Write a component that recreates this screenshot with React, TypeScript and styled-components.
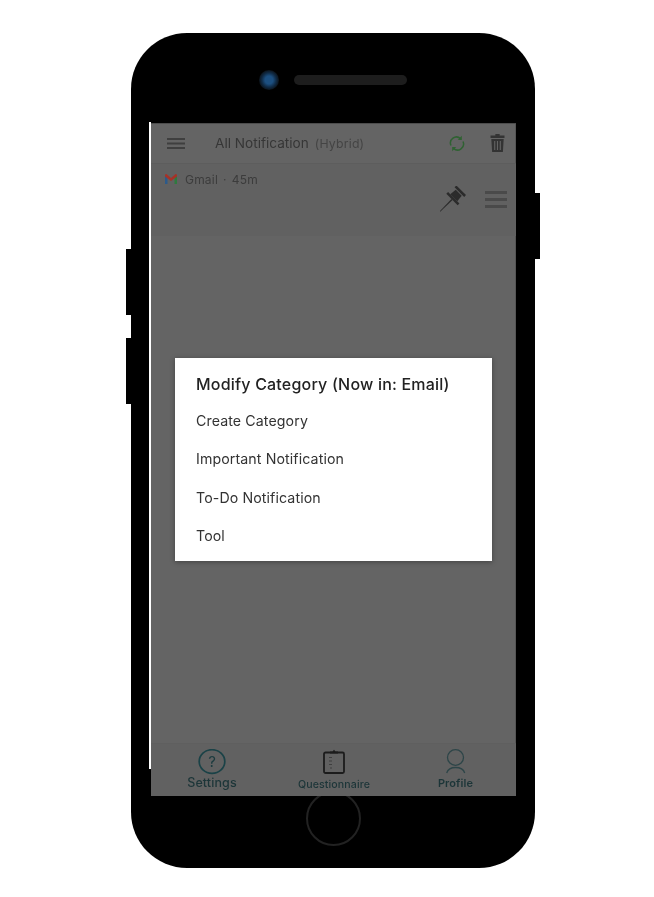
import React from "react";
import styled, { createGlobalStyle } from "styled-components";

const Global = createGlobalStyle`
  html, body { margin: 0; padding: 0; background: #fff; width: 654px; height: 897px; overflow: hidden; }
  * { box-sizing: border-box; }
  body { font-family: Inter, "Noto Sans", sans-serif; }
`;

const Page = styled.div`
  width: 654px;
  height: 897px;
  padding: 33px 119px 29px 131px;
  background: #fff;
`;

const Phone = styled.div`
  position: relative;
  width: 404px;
  height: 835px;
  background: #000;
  border-radius: 56px;
  display: flex;
  flex-direction: column;
  align-items: center;
`;

const SideButton = styled.div<{ $side: "left" | "right"; $top: number }>`
  position: absolute;
  ${(p) => (p.$side === "left" ? "left: -5px;" : "right: -5px;")}
  top: ${(p) => p.$top}px;
  width: 5px;
  height: 66px;
  background: #000;
`;

const Earpiece = styled.div`
  height: 90px;
  padding-top: 37px;
  display: flex;
  align-items: flex-start;
  gap: 15px;
`;

const Camera = styled.div`
  width: 20px;
  height: 20px;
  border-radius: 50%;
  background: radial-gradient(circle, #1c4f80 0 28%, #102c48 50%, #0c1620 68%, #08090b 100%);
  filter: blur(0.4px);
`;

const Speaker = styled.div`
  width: 113px;
  height: 10px;
  margin-top: 5px;
  border-radius: 5px;
  background: #1d1d1d;
`;

const ScreenWrap = styled.div`
  position: relative;
  width: 365px;
  height: 673px;
  margin-left: 1px;
  flex: none;
`;

const WhiteEdge = styled.div`
  position: absolute;
  left: -2px;
  top: -1px;
  width: 1.5px;
  height: 647px;
  background: #fff;
`;

const Screen = styled.div`
  width: 100%;
  height: 100%;
  background: #646464;
  display: flex;
  flex-direction: column;
  box-shadow: inset 0 1px 0 #4c4c4c, inset -1px 0 0 #555;
  filter: blur(0.5px);
`;

const Header = styled.div`
  height: 41px;
  flex: none;
  display: flex;
  align-items: center;
  padding: 0 11px 0 16px;
  border-bottom: 1px solid #5d5d5d;
`;

const Title = styled.div`
  margin-left: 30px;
  font-size: 13.6px;
  color: #363636;
  flex: 1;
  display: flex;
  align-items: baseline;
  gap: 6px;
`;

const Hybrid = styled.span`
  font-size: 12.3px;
  letter-spacing: 0.2px;
  color: #444;
`;

const HeaderIcons = styled.div`
  display: flex;
  align-items: center;
  gap: 25px;
`;

const NotificationRow = styled.div`
  height: 72px;
  flex: none;
  background: #616161;
  padding: 8px 9px 0 14px;
  display: flex;
  justify-content: space-between;
`;

const Source = styled.div`
  display: flex;
  align-items: center;
  height: 14px;
  gap: 8px;
  font-size: 12px;
  color: #3c3c3c;
`;

const SourceText = styled.div`
  display: flex;
  gap: 5px;
  letter-spacing: 0.2px;
`;

const RowActions = styled.div`
  display: flex;
  align-items: center;
  gap: 17px;
  height: 40px;
  margin-top: 7px;
`;

const Spacer = styled.div`
  flex: 1;
`;

const TabBar = styled.div`
  height: 53px;
  flex: none;
  display: grid;
  grid-template-columns: 122px 122px 121px;
  border-top: 1px solid #5f5f5f;
  background: #616161;
`;

const Tab = styled.div`
  display: flex;
  flex-direction: column;
  align-items: center;
  padding-top: 5px;
`;

const TabIcon = styled.div`
  height: 28px;
  display: flex;
  align-items: flex-start;
`;

const TabLabel = styled.div<{ $size: number; $weight: number; $drop: number }>`
  font-size: ${(p) => p.$size}px;
  font-weight: ${(p) => p.$weight};
  line-height: 13px;
  margin-top: ${(p) => p.$drop}px;
  color: #1c3538;
  letter-spacing: 0.1px;
`;

const Dialog = styled.div`
  position: absolute;
  left: 24px;
  top: 235px;
  width: 317px;
  height: 203px;
  background: #fff;
  padding: 15px 21px 0;
  box-shadow: 0 1px 5px rgba(0, 0, 0, 0.35);
  filter: blur(0.4px);
`;

const DialogTitle = styled.div`
  font-size: 16px;
  font-weight: 500;
  letter-spacing: 0.2px;
  line-height: 22px;
  color: #222;
  margin-bottom: 6px;
`;

const DialogItem = styled.div`
  height: 38.5px;
  display: flex;
  align-items: center;
  font-size: 14.2px;
  letter-spacing: 0.1px;
  color: #333;
`;

const HomeButton = styled.div`
  width: 55px;
  height: 55px;
  margin-top: -5px;
  border-radius: 50%;
  border: 2px solid #222;
  flex: none;
`;

const Menu = ({ w, h, c = "#3f3f3f", t = 2 }: { w: number; h: number; c?: string; t?: number }) => (
  <svg width={w} height={h} viewBox={`0 0 ${w} ${h}`}>
    <rect x="0" y="0" width={w} height={t} fill={c} />
    <rect x="0" y={(h - t) / 2} width={w} height={t} fill={c} />
    <rect x="0" y={h - t} width={w} height={t} fill={c} />
  </svg>
);

const Sync = () => (
  <svg width="16" height="17" viewBox="0 0 16 17" fill="none" stroke="#2f6232" strokeWidth="1.5">
    <path d="M2 10.5 A6 6 0 0 1 11.5 3.6" />
    <path d="M14 6.5 A6 6 0 0 1 4.5 13.4" />
    <path d="M12.8 0.8 V5 H8.8 Z" fill="#2f6232" stroke="none" />
    <path d="M3.2 16.2 V12 H7.2 Z" fill="#2f6232" stroke="none" />
  </svg>
);

const Trash = () => (
  <svg width="15" height="18" viewBox="0 0 14 18" preserveAspectRatio="none">
    <path d="M5 0 H9 V1.5 H13.5 V4 H0.5 V1.5 H5 Z" fill="#333" />
    <path d="M1.2 5 H12.8 L12 18 H2 Z" fill="#333" />
    <path d="M4.4 7 V16 M7 7 V16 M9.6 7 V16" stroke="#646464" strokeWidth="1" />
  </svg>
);

const Gmail = () => (
  <svg width="12" height="10" viewBox="0 0 12 10" fill="none">
    <path d="M0 1 V10 H2.5 V4 Z" fill="#2c5a8a" />
    <path d="M12 1 V10 H9.5 V4 Z" fill="#2f7a3f" />
    <path d="M0 0.6 L1.5 0 L6 4 L10.5 0 L12 0.6 L12 2.5 L6 7 L0 2.5 Z" fill="#a53228" />
  </svg>
);

const Pin = () => (
  <svg width="28" height="26" viewBox="0 0 28 26" fill="#2b2b2b">
    <g transform="translate(12 13.5) rotate(45)">
      <path d="M-0.8 0 H0.8 L0.3 17 H-0.3 Z" />
      <rect x="-8" y="-2.5" width="16" height="2.5" />
      <path d="M-5 -2.5 L-4.2 -9.5 H4.2 L5 -2.5 Z" />
      <rect x="-6.8" y="-13" width="13.6" height="2.6" />
    </g>
  </svg>
);

const Help = () => (
  <svg width="28" height="26" viewBox="0 0 28 26" fill="none">
    <ellipse cx="14" cy="12.5" rx="12.8" ry="11.8" stroke="#1a4247" strokeWidth="1.7" />
    <text x="14" y="18" textAnchor="middle" fontFamily="Inter, sans-serif" fontSize="15" fill="#1a3a3e">?</text>
  </svg>
);

const Clipboard = () => (
  <svg width="22" height="25" viewBox="0 0 22 25" fill="none">
    <rect x="1" y="3.5" width="20" height="20.5" rx="1.5" stroke="#1c1c1c" strokeWidth="1.8" />
    <path d="M7 4.5 V2.5 H9.5 L11 0.8 L12.5 2.5 H15 V4.5 Z" fill="#1c1c1c" />
    <path d="M6 8.5 H9 M6 12 H9 M6 15.5 H9 M7 19 H9" stroke="#3f3f3f" strokeWidth="1.1" />
  </svg>
);

const Person = () => (
  <svg width="20" height="25" viewBox="0 0 20 25" fill="none" stroke="#2d4548" strokeWidth="1.3">
    <ellipse cx="9.5" cy="8.5" rx="8" ry="7.8" />
    <path d="M0.7 24 C2 20 6 18.5 9.5 18.5 C13 18.5 17.5 20 18.7 24" />
  </svg>
);

export default function App() {
  return (
    <Page>
      <Global />
      <Phone>
        <SideButton $side="left" $top={216} />
        <SideButton $side="left" $top={305} />
        <SideButton $side="right" $top={160} />
        <Earpiece>
          <Camera />
          <Speaker />
        </Earpiece>
        <ScreenWrap>
          <WhiteEdge />
          <Screen>
            <Header>
              <Menu w={18} h={11} />
              <Title>
                All Notification <Hybrid>(Hybrid)</Hybrid>
              </Title>
              <HeaderIcons>
                <Sync />
                <Trash />
              </HeaderIcons>
            </Header>
            <NotificationRow>
              <Source>
                <Gmail />
                <SourceText>
                  <span>Gmail</span>
                  <span>·</span>
                  <span>45m</span>
                </SourceText>
              </Source>
              <RowActions>
                <Pin />
                <Menu w={22} h={17} c="#4a4a4a" t={3} />
              </RowActions>
            </NotificationRow>
            <Spacer />
            <TabBar>
              <Tab>
                <TabIcon><Help /></TabIcon>
                <TabLabel $size={12.5} $weight={500} $drop={-1}>Settings</TabLabel>
              </Tab>
              <Tab>
                <TabIcon><Clipboard /></TabIcon>
                <TabLabel $size={10.6} $weight={500} $drop={1}>Questionnaire</TabLabel>
              </Tab>
              <Tab>
                <TabIcon><Person /></TabIcon>
                <TabLabel $size={11} $weight={600} $drop={0}>Profile</TabLabel>
              </Tab>
            </TabBar>
          </Screen>
          <Dialog>
            <DialogTitle>Modify Category (Now in: Email)</DialogTitle>
            <DialogItem>Create Category</DialogItem>
            <DialogItem>Important Notification</DialogItem>
            <DialogItem>To-Do Notification</DialogItem>
            <DialogItem>Tool</DialogItem>
          </Dialog>
        </ScreenWrap>
        <HomeButton />
      </Phone>
    </Page>
  );
}
